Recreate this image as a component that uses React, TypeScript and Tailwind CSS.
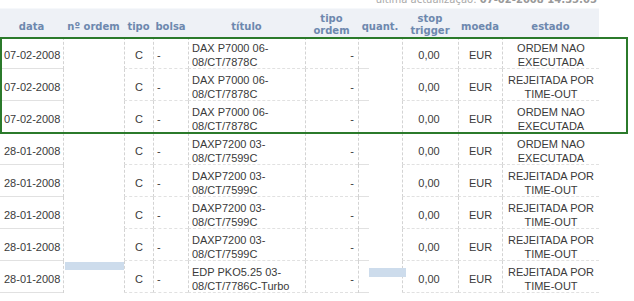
import React from 'react';

type Row = {
  data: string;
  titulo: [string, string];
  estado: [string, string];
  blue?: boolean;
};

const naoExec: [string, string] = ['ORDEM NAO', 'EXECUTADA'];
const timeout: [string, string] = ['REJEITADA POR', 'TIME-OUT'];
const dax7000: [string, string] = ['DAX P7000 06-', '08/CT/7878C'];
const dax7200: [string, string] = ['DAXP7200 03-', '08/CT/7599C'];

const rows: Row[] = [
  { data: '07-02-2008', titulo: dax7000, estado: naoExec },
  { data: '07-02-2008', titulo: dax7000, estado: timeout },
  { data: '07-02-2008', titulo: dax7000, estado: naoExec },
  { data: '28-01-2008', titulo: dax7200, estado: naoExec },
  { data: '28-01-2008', titulo: dax7200, estado: timeout },
  { data: '28-01-2008', titulo: dax7200, estado: timeout },
  { data: '28-01-2008', titulo: dax7200, estado: timeout },
  { data: '28-01-2008', titulo: ['EDP PKO5.25 03-', '08/CT/7786C-Turbo'], estado: timeout, blue: true },
];

const cols = 'grid grid-cols-[63px_61px_29px_35px_117px_53px_44px_56px_44px_97px]';
const cell = 'h-[32px] flex items-center border-b border-[#e1e1e1]';
const dash = 'border-l border-dashed border-l-[#d3d3d3]';

export default function App() {
  return (
    <div className="relative w-[634px] h-[301px] overflow-hidden bg-white font-['Liberation_Sans',Arial,sans-serif] text-[11px] text-[#3a3a3a]">
      {/* last update line, cut by the top edge */}
      <div className="w-[599px] h-[8px] overflow-hidden">
        <p className="-mt-[6px] text-right pr-[2px] leading-[12px] text-[10px] text-[#a8a8a8] font-['DejaVu_Sans',Verdana,sans-serif]">
          última actualização: <span className="font-bold text-[#999]">07-02-2008 14:35:05</span>
        </p>
      </div>

      <div className="w-[599px]">
        {/* header */}
        <div className={`${cols} h-[29px] bg-[#eef1f6] border-t border-[#f6f8fb] font-['DejaVu_Sans',Verdana,sans-serif] text-[10px] font-bold text-[#6d88ae] leading-[12px]`}>
          {['data', 'nº ordem', 'tipo', 'bolsa', 'título'].map((h) => (
            <div key={h} className="flex items-center justify-center pt-[7px] whitespace-nowrap">{h}</div>
          ))}
          <div className="flex items-center justify-center text-center pt-[4px]">tipo<br />ordem</div>
          <div className="flex items-center justify-center pt-[7px]">quant.</div>
          <div className="flex items-center justify-center text-center pt-[4px]">stop<br />trigger</div>
          <div className="flex items-center justify-center pt-[7px]">moeda</div>
          <div className="flex items-center justify-center pt-[7px]">estado</div>
        </div>

        {/* rows */}
        {rows.map((r, i) => (
          <div key={i} className={cols}>
            <div className={`${cell} pl-[4px] pt-[5px]`}>{r.data}</div>
            <div className={`h-[32px] ${dash}`}>
              {r.blue && <div className="ml-[1px] mt-[1px] w-[59px] h-[8px] bg-[#cddcec]" />}
            </div>
            <div className={`${cell} ${dash} justify-center pt-[5px]`}>C</div>
            <div className={`${cell} ${dash} pl-[3px] pt-[5px]`}>-</div>
            <div className={`${cell} ${dash} pl-[3px] pt-[4px] leading-[14px]`}>
              <span>{r.titulo[0]}<br />{r.titulo[1]}</span>
            </div>
            <div className={`${cell} ${dash} justify-end pr-[4px] pt-[5px]`}>-</div>
            <div className={`h-[32px] ${dash} flex flex-col`}>
              <div className="flex-1">
                {r.blue && <div className="relative ml-[10px] mt-[7px] w-[37px] h-[9px] bg-[#cddcec]" />}
              </div>
              <div className="w-[10px] h-px bg-[#e1e1e1]" />
            </div>
            <div className={`${cell} ${dash} justify-center pr-[3px] pt-[5px]`}>0,00</div>
            <div className={`${cell} ${dash} justify-center pt-[5px]`}>EUR</div>
            <div className={`${cell} ${dash} justify-center text-center pt-[4px] leading-[14px]`}>
              <span>{r.estado[0]}<br />{r.estado[1]}</span>
            </div>
          </div>
        ))}
      </div>

      {/* selection outline */}
      <div className="absolute left-0 top-[37px] w-[628px] h-[97px] border-2 border-[#2b7a2b] pointer-events-none" />
    </div>
  );
}
